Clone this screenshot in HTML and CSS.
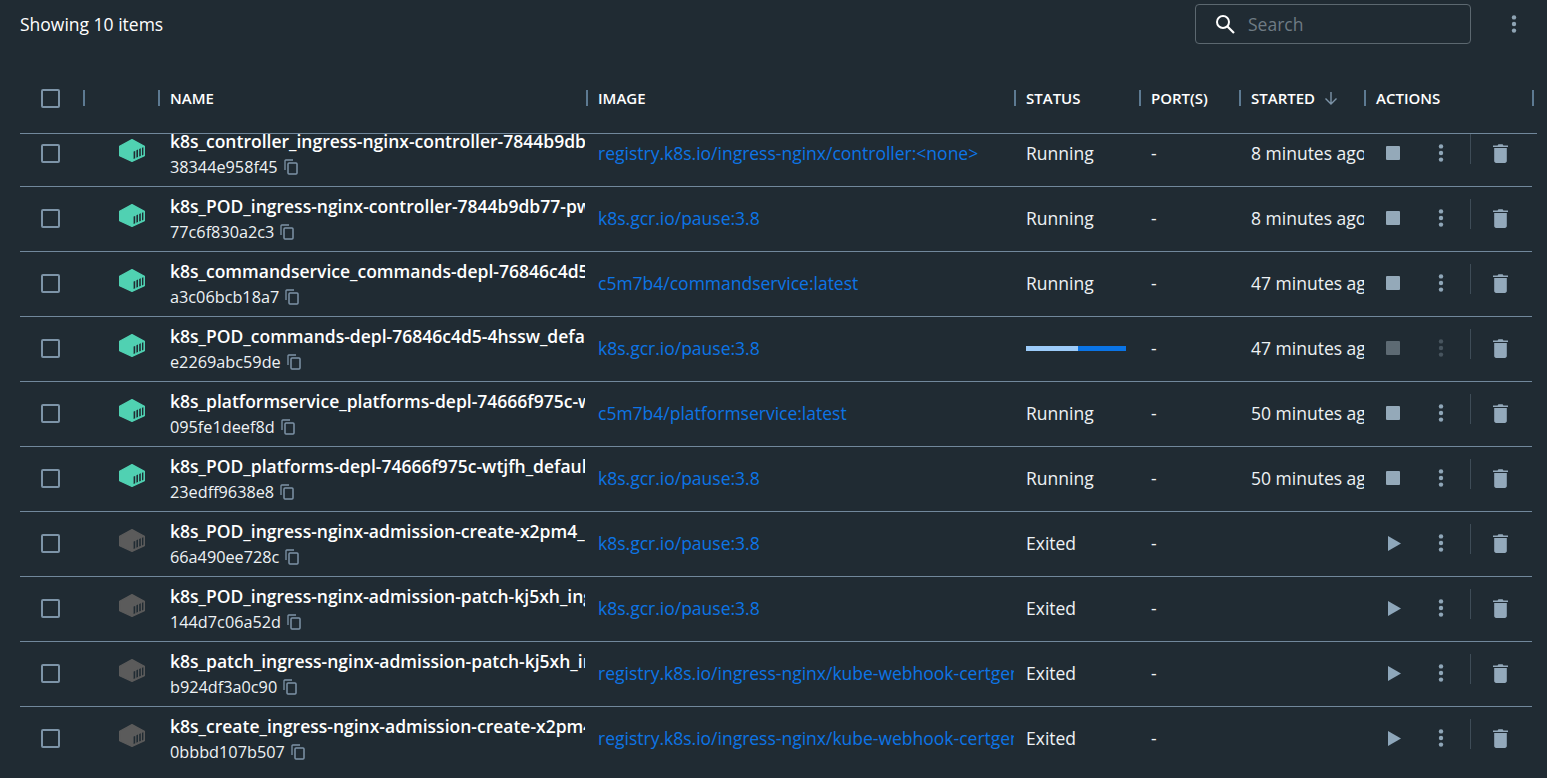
FILE: index.html
```html
<!doctype html>
<html>
<head>
	<meta charset="utf-8">
	<title>Containers</title>
	<link rel="stylesheet" href="styles.css">
</head>
<body>
	<!-- icons used by the rows -->
	<svg class="defs" width="0" height="0">
		<symbol id="i-box" viewBox="0 0 26 23">
			<path d="M13 .6 25.4 7.2V16.8L13 22.4 .6 16.8V7.2Z" fill="currentColor" stroke="currentColor" stroke-width="1.2" stroke-linejoin="round"/>
			<path d="M14.6 20V12.6L16.2 11.9V19.3ZM17.4 18.8V11.3L19 10.6V18.1ZM20.2 17.6V10L21.8 9.3V16.9ZM23 16.4V8.8L24.4 8.2V15.8Z" fill="#202b33"/>
		</symbol>
		<symbol id="i-copy" viewBox="0 0 14 16">
			<path d="M1 11V1.8C1 1.3 1.3 1 1.8 1H9" fill="none" stroke="currentColor" stroke-width="1.3"/>
			<rect x="4" y="4" width="9" height="11" rx="1" fill="none" stroke="currentColor" stroke-width="1.5"/>
		</symbol>
		<symbol id="i-dots" viewBox="0 0 6 18">
			<circle cx="3" cy="2.4" r="2.2" fill="currentColor"/>
			<circle cx="3" cy="9" r="2.2" fill="currentColor"/>
			<circle cx="3" cy="15.6" r="2.2" fill="currentColor"/>
		</symbol>
		<symbol id="i-stop" viewBox="0 0 14 14">
			<rect width="14" height="14" rx="1" fill="currentColor"/>
		</symbol>
		<symbol id="i-play" viewBox="0 0 13 15">
			<path d="M0 0 13 7.5 0 15Z" fill="currentColor"/>
		</symbol>
		<symbol id="i-trash" viewBox="0 0 15 19">
			<path d="M0 1.6H4.6L5.4 .2H9.6L10.4 1.6H15V3H0ZM1.2 4H13.8V17C13.8 18.1 13 18.9 11.9 18.9H3.1C2 18.9 1.2 18.1 1.2 17Z" fill="currentColor"/>
		</symbol>
	</svg>

	<div class="page">
		<!-- top bar -->
		<div class="topbar">
			<span class="count">Showing 10 items</span>
			<div class="search">
				<svg class="search-icon" viewBox="0 0 20 20" width="20" height="20">
					<circle cx="8" cy="8" r="6" fill="none" stroke="#fff" stroke-width="2"/>
					<path d="M12.5 12.5 19 19" stroke="#fff" stroke-width="2.2"/>
				</svg>
				<span class="placeholder">Search</span>
			</div>
			<svg class="top-dots"><use href="#i-dots"/></svg>
		</div>

		<!-- table head -->
		<div class="head">
			<div class="head-cell first"><span class="check"></span></div>
			<div class="head-cell"></div>
			<div class="head-cell">Name</div>
			<div class="head-cell">Image</div>
			<div class="head-cell">Status</div>
			<div class="head-cell">Port(s)</div>
			<div class="head-cell">Started
				<svg class="sort" viewBox="0 0 14 14" width="14" height="14">
					<path d="M7 1V13M1.5 7.5 7 13 12.5 7.5" fill="none" stroke="#7d94a8" stroke-width="1.4"/>
				</svg>
			</div>
			<div class="head-cell last">Actions</div>
		</div>

		<!-- rows, the list is scrolled 12px -->
		<div class="list">
			<div class="rows">
				<div class="row">
					<div class="cell"><span class="check"></span></div>
					<div class="cell"><svg class="box on"><use href="#i-box"/></svg></div>
					<div class="cell name">
						<div class="title">k8s_controller_ingress-nginx-controller-7844b9db77-pwq8t_ingress-nginx</div>
						<div class="id">38344e958f45 <svg class="copy"><use href="#i-copy"/></svg></div>
					</div>
					<div class="cell image"><a href="#">registry.k8s.io/ingress-nginx/controller:&lt;none&gt;</a></div>
					<div class="cell">Running</div>
					<div class="cell">-</div>
					<div class="cell">8 minutes ago</div>
					<div class="cell actions">
						<span class="btn"><svg class="stop"><use href="#i-stop"/></svg></span>
						<span class="btn"><svg class="dots"><use href="#i-dots"/></svg></span>
						<span class="sep"></span>
						<span class="btn"><svg class="trash"><use href="#i-trash"/></svg></span>
					</div>
				</div>
				<div class="row">
					<div class="cell"><span class="check"></span></div>
					<div class="cell"><svg class="box on"><use href="#i-box"/></svg></div>
					<div class="cell name">
						<div class="title">k8s_POD_ingress-nginx-controller-7844b9db77-pwq8t_ingress-nginx</div>
						<div class="id">77c6f830a2c3 <svg class="copy"><use href="#i-copy"/></svg></div>
					</div>
					<div class="cell image"><a href="#">k8s.gcr.io/pause:3.8</a></div>
					<div class="cell">Running</div>
					<div class="cell">-</div>
					<div class="cell">8 minutes ago</div>
					<div class="cell actions">
						<span class="btn"><svg class="stop"><use href="#i-stop"/></svg></span>
						<span class="btn"><svg class="dots"><use href="#i-dots"/></svg></span>
						<span class="sep"></span>
						<span class="btn"><svg class="trash"><use href="#i-trash"/></svg></span>
					</div>
				</div>
				<div class="row">
					<div class="cell"><span class="check"></span></div>
					<div class="cell"><svg class="box on"><use href="#i-box"/></svg></div>
					<div class="cell name">
						<div class="title">k8s_commandservice_commands-depl-76846c4d5-4hssw_default</div>
						<div class="id">a3c06bcb18a7 <svg class="copy"><use href="#i-copy"/></svg></div>
					</div>
					<div class="cell image"><a href="#">c5m7b4/commandservice:latest</a></div>
					<div class="cell">Running</div>
					<div class="cell">-</div>
					<div class="cell">47 minutes ago</div>
					<div class="cell actions">
						<span class="btn"><svg class="stop"><use href="#i-stop"/></svg></span>
						<span class="btn"><svg class="dots"><use href="#i-dots"/></svg></span>
						<span class="sep"></span>
						<span class="btn"><svg class="trash"><use href="#i-trash"/></svg></span>
					</div>
				</div>
				<div class="row">
					<div class="cell"><span class="check"></span></div>
					<div class="cell"><svg class="box on"><use href="#i-box"/></svg></div>
					<div class="cell name">
						<div class="title">k8s_POD_commands-depl-76846c4d5-4hssw_default_0123</div>
						<div class="id">e2269abc59de <svg class="copy"><use href="#i-copy"/></svg></div>
					</div>
					<div class="cell image"><a href="#">k8s.gcr.io/pause:3.8</a></div>
					<div class="cell"><span class="progress"><span class="progress-done"></span></span></div>
					<div class="cell">-</div>
					<div class="cell">47 minutes ago</div>
					<div class="cell actions">
						<span class="btn"><svg class="stop dim"><use href="#i-stop"/></svg></span>
						<span class="btn"><svg class="dots dim"><use href="#i-dots"/></svg></span>
						<span class="sep"></span>
						<span class="btn"><svg class="trash"><use href="#i-trash"/></svg></span>
					</div>
				</div>
				<div class="row">
					<div class="cell"><span class="check"></span></div>
					<div class="cell"><svg class="box on"><use href="#i-box"/></svg></div>
					<div class="cell name">
						<div class="title">k8s_platformservice_platforms-depl-74666f975c-wtjfh_default</div>
						<div class="id">095fe1deef8d <svg class="copy"><use href="#i-copy"/></svg></div>
					</div>
					<div class="cell image"><a href="#">c5m7b4/platformservice:latest</a></div>
					<div class="cell">Running</div>
					<div class="cell">-</div>
					<div class="cell">50 minutes ago</div>
					<div class="cell actions">
						<span class="btn"><svg class="stop"><use href="#i-stop"/></svg></span>
						<span class="btn"><svg class="dots"><use href="#i-dots"/></svg></span>
						<span class="sep"></span>
						<span class="btn"><svg class="trash"><use href="#i-trash"/></svg></span>
					</div>
				</div>
				<div class="row">
					<div class="cell"><span class="check"></span></div>
					<div class="cell"><svg class="box on"><use href="#i-box"/></svg></div>
					<div class="cell name">
						<div class="title">k8s_POD_platforms-depl-74666f975c-wtjfh_default_0123</div>
						<div class="id">23edff9638e8 <svg class="copy"><use href="#i-copy"/></svg></div>
					</div>
					<div class="cell image"><a href="#">k8s.gcr.io/pause:3.8</a></div>
					<div class="cell">Running</div>
					<div class="cell">-</div>
					<div class="cell">50 minutes ago</div>
					<div class="cell actions">
						<span class="btn"><svg class="stop"><use href="#i-stop"/></svg></span>
						<span class="btn"><svg class="dots"><use href="#i-dots"/></svg></span>
						<span class="sep"></span>
						<span class="btn"><svg class="trash"><use href="#i-trash"/></svg></span>
					</div>
				</div>
				<div class="row">
					<div class="cell"><span class="check"></span></div>
					<div class="cell"><svg class="box"><use href="#i-box"/></svg></div>
					<div class="cell name">
						<div class="title">k8s_POD_ingress-nginx-admission-create-x2pm4_ingress-nginx</div>
						<div class="id">66a490ee728c <svg class="copy"><use href="#i-copy"/></svg></div>
					</div>
					<div class="cell image"><a href="#">k8s.gcr.io/pause:3.8</a></div>
					<div class="cell">Exited</div>
					<div class="cell">-</div>
					<div class="cell"></div>
					<div class="cell actions">
						<span class="btn"><svg class="play"><use href="#i-play"/></svg></span>
						<span class="btn"><svg class="dots"><use href="#i-dots"/></svg></span>
						<span class="sep"></span>
						<span class="btn"><svg class="trash"><use href="#i-trash"/></svg></span>
					</div>
				</div>
				<div class="row">
					<div class="cell"><span class="check"></span></div>
					<div class="cell"><svg class="box"><use href="#i-box"/></svg></div>
					<div class="cell name">
						<div class="title">k8s_POD_ingress-nginx-admission-patch-kj5xh_ingress-nginx</div>
						<div class="id">144d7c06a52d <svg class="copy"><use href="#i-copy"/></svg></div>
					</div>
					<div class="cell image"><a href="#">k8s.gcr.io/pause:3.8</a></div>
					<div class="cell">Exited</div>
					<div class="cell">-</div>
					<div class="cell"></div>
					<div class="cell actions">
						<span class="btn"><svg class="play"><use href="#i-play"/></svg></span>
						<span class="btn"><svg class="dots"><use href="#i-dots"/></svg></span>
						<span class="sep"></span>
						<span class="btn"><svg class="trash"><use href="#i-trash"/></svg></span>
					</div>
				</div>
				<div class="row">
					<div class="cell"><span class="check"></span></div>
					<div class="cell"><svg class="box"><use href="#i-box"/></svg></div>
					<div class="cell name">
						<div class="title">k8s_patch_ingress-nginx-admission-patch-kj5xh_ingress-nginx</div>
						<div class="id">b924df3a0c90 <svg class="copy"><use href="#i-copy"/></svg></div>
					</div>
					<div class="cell image"><a href="#">registry.k8s.io/ingress-nginx/kube-webhook-certgen:v1.1.1</a></div>
					<div class="cell">Exited</div>
					<div class="cell">-</div>
					<div class="cell"></div>
					<div class="cell actions">
						<span class="btn"><svg class="play"><use href="#i-play"/></svg></span>
						<span class="btn"><svg class="dots"><use href="#i-dots"/></svg></span>
						<span class="sep"></span>
						<span class="btn"><svg class="trash"><use href="#i-trash"/></svg></span>
					</div>
				</div>
				<div class="row">
					<div class="cell"><span class="check"></span></div>
					<div class="cell"><svg class="box"><use href="#i-box"/></svg></div>
					<div class="cell name">
						<div class="title">k8s_create_ingress-nginx-admission-create-x2pm4_ingress-nginx</div>
						<div class="id">0bbbd107b507 <svg class="copy"><use href="#i-copy"/></svg></div>
					</div>
					<div class="cell image"><a href="#">registry.k8s.io/ingress-nginx/kube-webhook-certgen:v1.1.1</a></div>
					<div class="cell">Exited</div>
					<div class="cell">-</div>
					<div class="cell"></div>
					<div class="cell actions">
						<span class="btn"><svg class="play"><use href="#i-play"/></svg></span>
						<span class="btn"><svg class="dots"><use href="#i-dots"/></svg></span>
						<span class="sep"></span>
						<span class="btn"><svg class="trash"><use href="#i-trash"/></svg></span>
					</div>
				</div>
			</div>
		</div>
	</div>
</body>
</html>
```

FILE: styles.css
```css
html,body{margin:0;padding:0;height:100%;}
body{
	background-color:#202b33;
	color:#eef2f5;
	font-family:"Open Sans","Noto Sans",sans-serif;
	font-size:17.5px;
	overflow:hidden;
}
.defs{position:absolute;}
.page{
	height:778px;
	padding-left:20px;
	display:flex;
	flex-direction:column;
}
/* top bar */
.topbar{
	height:48px;
	display:flex;
	align-items:center;
	padding-right:23px;
}
.count{color:#fff;}
.search{
	width:274px;
	height:38px;
	margin-left:auto;
	border:1px solid #5c6870;
	border-radius:4px;
	display:flex;
	align-items:center;
}
.search-icon{margin-left:19px;}
.placeholder{margin-left:13px;color:#6f7b84;}
.top-dots{width:6px;height:18px;margin:0 7px 0 40px;color:#8fa4b4;}
/* table head */
.head{
	margin:15px 10px 0 0;
	height:70px;
	border-bottom:1px solid #71889c;
	display:grid;
	grid-template-columns:63px 75px 428px 428px 125px 100px 125px 1fr;
	font-size:15px;
	font-weight:600;
	text-transform:uppercase;
	color:#fff;
}
.head-cell{
	display:flex;
	align-items:center;
}
.head-cell:before{
	content:"";
	width:2px;
	height:16px;
	margin-right:10px;
	background-color:#5d7a92;
}
.head-cell.first{padding-left:21px;}
.head-cell.first:before{display:none;}
.head-cell.last{position:relative;}
/* the last divider closes the actions column */
.head-cell.last:after{
	content:"";
	position:absolute;
	right:3px;
	top:27px;
	width:2px;
	height:16px;
	background-color:#5d7a92;
}
.sort{margin-left:9px;}
.check{
	display:block;
	width:15px;
	height:15px;
	border:2px solid #7d94a8;
	border-radius:2px;
}
/* rows */
.list{flex:1;overflow:hidden;}
.rows{margin-top:-12px;}
.row{
	width:1512px;
	height:64px;
	border-bottom:1px solid #71889c;
	display:grid;
	grid-template-columns:63px 75px 428px 428px 125px 100px 125px 1fr;
}
.row:last-child{border-bottom-color:transparent;}
.cell{
	padding:0 1px 2px 12px;
	display:flex;
	align-items:center;
	overflow:hidden;
	white-space:nowrap;
}
.cell:first-child{padding-left:21px;}
.box{
	width:26px;
	height:23px;
	margin:0 0 5px 24px;
	color:#5b5b5b;
}
.box.on{color:#50d1b2;}
.name{
	display:block;
	padding-top:7px;
}
.title{
	font-weight:600;
	color:#fff;
	line-height:25px;
	overflow:hidden;
}
.id{
	font-size:16.25px;
	line-height:26px;
	display:flex;
	align-items:center;
}
.copy{
	width:14px;
	height:16px;
	margin-left:6px;
	color:#7d94a8;
}
.image a{
	color:#0d75e6;
	text-decoration:none;
}
.progress{
	display:block;
	width:100px;
	height:5px;
	background-color:#0a74e6;
}
.progress-done{
	display:block;
	width:52px;
	height:5px;
	background-color:#9ccbf9;
}
/* action buttons */
.actions{padding:0 0 2px 5px;}
.btn{
	width:48px;
	display:flex;
	justify-content:center;
	align-items:center;
}
.stop{width:14px;height:14px;color:#94a9b9;}
.stop.dim{color:#5d6a73;}
.play{width:13px;height:15px;margin-left:2px;color:#8ea7bb;}
.dots{width:6px;height:18px;color:#8fa6b8;}
.dots.dim{color:#47545e;}
.trash{width:15px;height:19px;color:#93a9bb;}
.sep{
	width:1px;
	height:30px;
	margin:0 5px 8px 5px;
	background-color:#3e4c57;
}
```
